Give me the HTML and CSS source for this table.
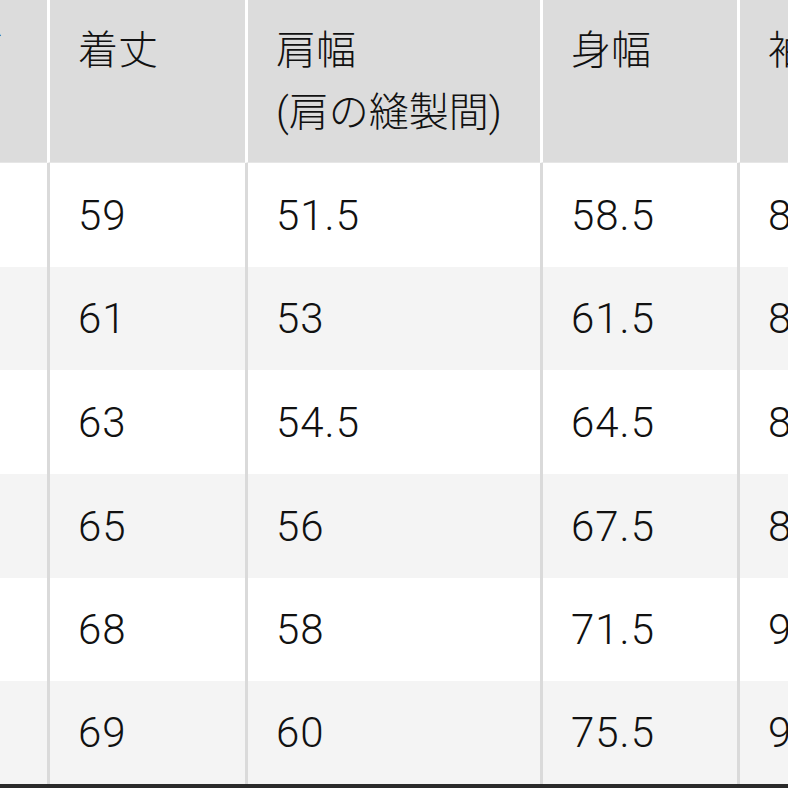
FILE: index.html
```html
<!DOCTYPE html>
<html lang="ja">
<head>
<meta charset="utf-8">
<title>サイズ表</title>
<link rel="stylesheet" href="styles.css">
</head>
<body>
<div class="sheet">
  <div class="grid">
    <div class="cell head first">サイズ</div>
    <div class="cell head">着丈</div>
    <div class="cell head">肩幅<br>(肩の縫製間)</div>
    <div class="cell head">身幅</div>
    <div class="cell head">袖丈</div>

    <div class="cell first">XS</div><div class="cell">59</div><div class="cell">51.5</div><div class="cell">58.5</div><div class="cell">81</div>
    <div class="cell alt first">S</div><div class="cell alt">61</div><div class="cell alt">53</div><div class="cell alt">61.5</div><div class="cell alt">83</div>
    <div class="cell first">M</div><div class="cell">63</div><div class="cell">54.5</div><div class="cell">64.5</div><div class="cell">85</div>
    <div class="cell alt first">L</div><div class="cell alt">65</div><div class="cell alt">56</div><div class="cell alt">67.5</div><div class="cell alt">87</div>
    <div class="cell first">XL</div><div class="cell">68</div><div class="cell">58</div><div class="cell">71.5</div><div class="cell">90</div>
    <div class="cell alt first">XXL</div><div class="cell alt">69</div><div class="cell alt">60</div><div class="cell alt">75.5</div><div class="cell alt">92</div>
  </div>
  <div class="bottom"></div>
</div>
</body>
</html>
```

FILE: styles.css
```css
html, body {
  margin: 0;
  padding: 0;
  background: #ffffff;
  overflow: hidden;
}

.sheet {
  width: 788px;
  height: 788px;
  overflow: hidden;
  display: flex;
  flex-direction: column;
}

.grid {
  display: grid;
  margin-left: -150px;
  grid-template-columns: 197px 198px 295px 197px 210px;
  grid-template-rows: 163px 104px 103px 104px 104px 103px 103px;
  font-family: "Roboto", "Noto Sans CJK JP", sans-serif;
  font-weight: 300;
  font-size: 42px;
  letter-spacing: 1px;
  color: #111111;
}

.cell {
  border-left: 3px solid #dadada;
  padding-left: 28px;
  display: flex;
  align-items: center;
  white-space: nowrap;
  overflow: hidden;
  background: #ffffff;
}

.cell.alt {
  background: #f4f4f4;
}

.cell.first {
  border-left: none;
  padding-left: 0;
  justify-content: flex-end;
  color: transparent;
}

.cell.head {
  background: #dcdcdc;
  border-left-color: #ffffff;
  padding-top: 20px;
  font-size: 40px;
  letter-spacing: 0;
  line-height: 62px;
  display: block;
  border-bottom: 1px solid #e6e6e6;
}

.cell.head.first {
  border-left: none;
  text-align: right;
  padding-right: 0;
  color: #111111;
}

.cell.head.first::after {
  content: "";
  display: inline-block;
  width: 44px;
}

.bottom {
  height: 4px;
  background: #2a2a2a;
}
```
